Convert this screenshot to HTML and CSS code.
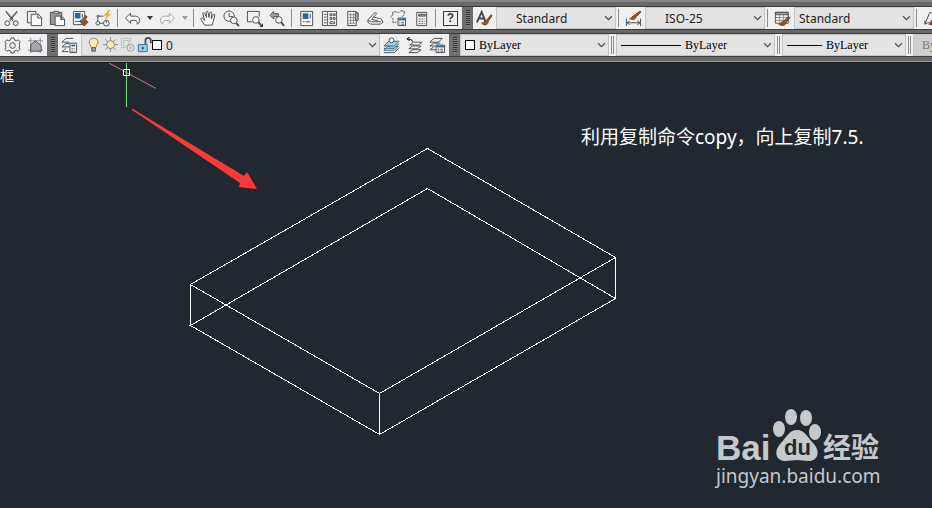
FILE: index.html
```html
<!DOCTYPE html>
<html lang="zh-CN">
<head>
    <meta charset="UTF-8">
    <meta name="viewport" content="width=device-width, initial-scale=1.0">
    <title>CAD</title>
    <link rel="stylesheet" href="styles.css">
</head>
<body>
    <header>
        <!-- Standard + Styles toolbars -->
        <div class="toolbar">
            <button aria-label="Cut"><svg viewBox="0 0 18 18"><path d="M3 2l8 10M15 2L7 12"/><path d="M3 1l8 9M15 1L7 10"/><circle cx="4.500" cy="14" r="2.500"/><circle cx="13.500" cy="14" r="2.500"/></svg></button>
            <button aria-label="Copy"><svg viewBox="0 0 18 18"><path d="M5 13.500H1.500V1.500H10.500V4" /><path class="paper" d="M5.500 4.500H13l3.500 3.500V16.500H5.500zM12.500 4.500V8.500H16.500"/></svg></button>
            <button aria-label="Paste"><svg viewBox="0 0 18 18"><path class="board" d="M1.500 2.500H13.500V15.500H1.500z"/><path class="paper" d="M5 1.500h5v2H5z"/><path class="paper" d="M6.500 6.500H13l3.500 3V16.500H6.500zM12.500 6.500V10H16.500"/></svg></button>
            <button aria-label="Match properties"><svg viewBox="0 0 18 18"><path class="paper" d="M1.500 1.500H13.500V15.500H1.500z"/><path class="blue" d="M3 3h6v6H3z"/><path d="M11 4v4M3 12h5"/><path class="brush" d="M8 12l5 5 4-4-3-3 2-3-2-1-2 3z"/></svg></button>
            <button aria-label="Block editor"><svg viewBox="0 0 18 18"><path d="M9 6.500H3v7.500h7"/><circle class="paper" cx="3" cy="6.500" r="1"/><circle class="paper" cx="3" cy="14" r="2"/><circle class="paper" cx="12" cy="14" r="3"/><path d="M12 11v3"/><path class="gold" d="M14 0L9 6h3l-2 5 7-7h-3l2-4z"/></svg></button>
            <span class="sep"></span>
            <button aria-label="Undo"><svg viewBox="0 0 18 18"><path class="paper" d="M1.500 8.500L7 3.500V6.500H12c3 0 4.500 2 4.500 4.500s-1 3-2.500 4c.5-3-1-4-2.500-4H7v3z"/></svg></button>
            <button class="drop" aria-label="Undo list"><svg viewBox="0 0 8 8"><path class="ink" d="M1 2h6L4 6z"/></svg></button>
            <button class="dim" aria-label="Redo"><svg viewBox="0 0 18 18"><path class="paper" d="M16.500 8.500L11 3.500V6.500H6C3 6.500 1.500 8.500 1.500 11s1 3 2.500 4c-.5-3 1-4 2.500-4H11v3z"/></svg></button>
            <button class="drop dim" aria-label="Redo list"><svg viewBox="0 0 8 8"><path class="ink" d="M1 2h6L4 6z"/></svg></button>
            <span class="sep"></span>
            <button aria-label="Pan"><svg viewBox="0 0 18 18"><path class="paper" d="M5 16L1 10c-.5-1.500 1-2 2-1l2 2L3 4c0-1.500 1.500-1.500 2-.5L7 8 6.500 2.500c0-1.500 2-1.500 2 0L9.500 8l1-5c.5-1.500 2-1 2 .5L12 9l2-4c1-1 2-.5 1.500 1L14 12l-1 4z"/></svg></button>
            <button aria-label="Zoom realtime"><svg viewBox="0 0 18 18"><circle cx="6.500" cy="6.500" r="5.500"/><path d="M6.500 3v4h4"/><circle class="lens" cx="11.500" cy="11" r="3.500"/><path class="thick" d="M14 14l3 3"/></svg></button>
            <button aria-label="Zoom window"><svg viewBox="0 0 18 18"><path d="M7 12.500H1.500V1.500H14V7"/><circle class="lens" cx="10.500" cy="10.500" r="3.500"/><path class="thick" d="M13 13l3 3"/><path class="ink" d="M18 14v4h-4z"/></svg></button>
            <button aria-label="Zoom previous"><svg viewBox="0 0 18 18"><path class="steel" d="M1 5.500L5 1.500v2.500h5v3H5v2.500z"/><circle class="lens" cx="10.500" cy="10.500" r="3.500"/><path class="thick" d="M13 13l3 4"/></svg></button>
            <span class="sep"></span>
            <button aria-label="Properties"><svg viewBox="0 0 18 18"><path class="paper" d="M3 1.500H15.500V16.500H3z"/><path class="blue" d="M5 3.500h6v6H5z"/><path d="M13 4v5M5 12.500h2M8 12.500h5"/></svg></button>
            <button aria-label="DesignCenter"><svg viewBox="0 0 18 18"><path class="paper" d="M1.500 1.500H16.500V16.500H1.500z"/><path d="M7 2v14M3 4.500h3M3 7.500h3M3 10.500h3M3 13.500h3M9.500 4h2v2h-2zM13 4h2v2h-2zM13 8h2v2h-2zM9.500 8h2v2h-2zM9.500 12.500h5v2h-5z"/></svg></button>
            <button aria-label="Tool palettes"><svg viewBox="0 0 18 18"><path class="paper" d="M4 1.500H13V16.500H4z"/><path class="steel" d="M12 3h3v8h-3z"/><path class="fine" d="M7 3v12M10 3v12M5 5h7M5 8h7M5 11h7M5 14h7"/></svg></button>
            <button aria-label="Sheet set manager"><svg viewBox="0 0 18 18"><path class="paper" d="M1 10.500L8 3c1-1 2.500 0 1.500 1.500L7 7.500l8 2 2 3.500-3 2H4l-3-2z"/><path d="M1 11l4 1.500h10M7 7.500L5 10l7 1.500"/></svg></button>
            <button aria-label="Markup set manager"><svg viewBox="0 0 18 18"><path class="cloud" d="M3 5V2h4l2 1 2-2h4v4l-2 2M3 5l-2 2 2 2v4h4"/><path class="paper" d="M8.500 8.500h8v8h-8z"/><path class="blue" d="M9 9h7v2H9z"/><path d="M10 13h1M12 13h3M10 15h1M12 15h3"/></svg></button>
            <button aria-label="QuickCalc"><svg viewBox="0 0 18 18"><path class="paper" d="M4 2.500H14.500V16.500H4z"/><path class="steel" d="M6 4.500h7v2H6z"/><path class="dots" d="M6 9.500h7M6 12h7M6 14.500h7"/></svg></button>
            <span class="sep"></span>
            <button class="help" aria-label="Help"><span>?</span></button>
            <span class="grip"></span>
            <button aria-label="Text style"><svg viewBox="0 0 18 18"><path class="thick" d="M1 13L6 2l4 10M3 9h6"/><path class="brush" d="M6 14c3 0 2-3 5-3l5-6 1 1-4 6c0 4-4 5-7 2z"/></svg></button>
            <div class="combo style"><select class="indent" aria-label="Text style"><option>Standard</option></select><svg viewBox="0 0 8 6"><path d="M1 1l3 3 3-3"/></svg></div>
            <span class="sep"></span>
            <button aria-label="Dimension style"><svg viewBox="0 0 18 18"><path d="M1.500 9v8M16.500 9v8M2 13.500h14M5 11.500l-3 2 3 2M13 11.500l3 2-3 2"/><path class="brush" d="M5 9c2 0 2-2 4-3l7-5 1 1-5 5c-1 3-4 4-7 2z"/></svg></button>
            <div class="combo style"><select class="indent" aria-label="Dimension style"><option>ISO-25</option></select><svg viewBox="0 0 8 6"><path d="M1 1l3 3 3-3"/></svg></div>
            <span class="sep"></span>
            <button aria-label="Table style"><svg viewBox="0 0 18 18"><path class="paper" d="M1.500 2.500H15V14H1.500z"/><path class="steel" d="M1.500 2.500H15V5H1.500z"/><path class="fine" d="M2 8h12M2 11h12M6 5v9M10 5v9"/><path class="brush" d="M5 15c3 0 2-3 5-3l5-5 2 1-4 5c-1 4-5 4-8 2z"/></svg></button>
            <div class="combo style"><select aria-label="Table style"><option>Standard</option></select><svg viewBox="0 0 8 6"><path d="M1 1l3 3 3-3"/></svg></div>
            <span class="sep"></span>
            <button aria-label="Multileader style"><svg viewBox="0 0 18 18"><path d="M2 15L7 3h9M2 15v-4M2 15l4-2"/><path class="brush" d="M6 15l5-6h5v8z"/></svg></button>
        </div>

        <!-- Layers + Properties toolbars -->
        <div class="toolbar layers">
            <button aria-label="Workspace settings"><svg viewBox="0 0 18 18"><path d="M7.500 1h3l.5 2 2 1 2-1 2 2-1 2 .5 2-.5 2 1 2-2 2-2-1-2 1-.5 2h-3L7 15l-2-1-2 1-2-2 1-2-.5-2L2 7 1 5l2-2 2 1 2-1z"/><circle cx="9" cy="9" r="3"/></svg></button>
            <button aria-label="My workspace"><svg viewBox="0 0 18 18"><path class="fine" d="M4 1v16M14 1v16M1 4h16M1 14h16"/><path class="steel" d="M4 8l5-4 6 5v6H4z"/></svg></button>
            <span class="grip"></span>
            <button aria-label="Layer properties"><svg viewBox="0 0 18 18"><path d="M9 1.500H5l-4 4h8M9 7H5l-4 3.500h8M5 12l-4 3.500h7M9 1.500h4"/><path class="paper" d="M9.500 6.500h7v10h-7z"/><path class="blue" d="M11 8h4v2h-4z"/><path class="dots" d="M11 12.500h4M11 15h4"/></svg></button>
            <div class="combo layer">
                <svg class="state" viewBox="0 0 18 18"><path class="bulb" d="M6 12L4.500 8.500C2 4 5 1.500 8.500 1.500S15 4 12.500 8.500L11 12z"/><path class="steel" d="M6.500 12h4v4h-4z"/></svg>
                <svg class="state" viewBox="0 0 18 18"><path class="fine" d="M8.500 0v17M0 8.500h17M2.500 2.500l12 12M14.500 2.500l-12 12"/><circle class="bulb" cx="8.500" cy="8.500" r="4.500"/></svg>
                <svg class="state dim" viewBox="0 0 18 18"><path class="fine" d="M12 6V1.500H1.500V12H8M4 4h6v6H4z"/><circle cx="12" cy="12" r="4"/><circle cx="12" cy="12" r="1"/></svg>
                <svg class="state" viewBox="0 0 18 18"><path class="sky" d="M1.500 8.500h10v8h-10z"/><path class="thick" d="M9.500 8V4c0-4 6-4 6 0v3M6.500 11v3"/></svg>
                <span class="swatch"></span>
                <select aria-label="Layer"><option>0</option></select><svg viewBox="0 0 8 6"><path d="M1 1l3 3 3-3"/></svg>
            </div>
            <button aria-label="Make layer current"><svg viewBox="0 0 18 18"><path d="M1 14l4-4h11l-4 4zM1 16.500h11l5-5"/><path class="sky" d="M1 9.500l5-5h11l-5 5zM1 12h11l5-5"/><circle class="lens" cx="9" cy="3.500" r="2.500"/></svg></button>
            <button aria-label="Layer previous"><svg viewBox="0 0 18 18"><path class="paper" d="M3 16.500l4-3h9l-4 3zM3 12.500l4-3h9l-4 3zM4 8.500l4-3h9l-4 3z"/><path class="black" d="M7 5c0-2-3-3-6-3M4 0L1 2l3 2"/></svg></button>
            <button aria-label="Layer states"><svg viewBox="0 0 18 18"><path d="M1 5.500l4-4h9l-4 4zM1 9.500l4-3h7M1 9.500h7M1 13.500l4-3M1 13.500h6"/><path class="paper" d="M7.500 8.500h9v8h-9z"/><path class="blue" d="M8 9h8v2H8z"/><path d="M9 13h2M12 13h3M9 15h2M12 15h3"/></svg></button>
            <span class="grip"></span>
            <div class="combo color"><span class="swatch"></span><select aria-label="Color"><option>ByLayer</option></select><svg viewBox="0 0 8 6"><path d="M1 1l3 3 3-3"/></svg></div>
            <span class="sep double"></span>
            <div class="combo linetype"><span class="line long"></span><select aria-label="Linetype"><option>ByLayer</option></select><svg viewBox="0 0 8 6"><path d="M1 1l3 3 3-3"/></svg></div>
            <span class="sep double"></span>
            <div class="combo lineweight"><span class="line"></span><select aria-label="Lineweight"><option>ByLayer</option></select><svg viewBox="0 0 8 6"><path d="M1 1l3 3 3-3"/></svg></div>
            <span class="sep double"></span>
            <div class="combo plot"><select aria-label="Plot style" disabled><option>ByColor</option></select></div>
        </div>
    </header>

    <main>
        <svg class="drawing">
            <g class="wire">
                <path d="M427.500 85.500L615.500 194.500L379.500 330.500L190.500 221.500Z"/>
                <path d="M427.500 125.500L615.500 235.500L379.500 371.500L190.500 262.500Z"/>
                <path d="M190.500 221.500V262.500M379.500 330.500V371.500M615.500 194.500V235.500"/>
            </g>
            <!-- crosshair -->
            <path class="axis-x" d="M109 0L156 25.500"/>
            <path class="axis-y" d="M126.500 0V44"/>
            <path class="pickbox" d="M123.500 6.500h6v6h-6z"/>
            <path class="arrow" d="M132 45L133 46L244 113L247 109L257 126L239 124L240 120L132 47Z"/>
        </svg>
        <span class="view-label">框</span>
        <p class="note">利用复制命令copy，向上复制7.5.</p>
        <div class="watermark">
            <svg viewBox="0 0 170 54">
                <text class="bai" x="0" y="52">Bai</text>
                <ellipse cx="63" cy="21" rx="6" ry="8"/>
                <ellipse cx="75" cy="9" rx="6" ry="8"/>
                <ellipse cx="90" cy="10" rx="6" ry="8"/>
                <ellipse cx="99" cy="24" rx="6" ry="8"/>
                <path d="M81 22c8 0 11 8 16 13 8 8 5 18-4 18-5 0-8-1-12-1s-7 1-12 1c-9 0-12-10-4-18 5-5 8-13 16-13z"/>
                <text class="du" x="68" y="47">du</text>
                <text class="jing" x="107" y="50">经验</text>
            </svg>
            <span>jingyan.baidu.com</span>
        </div>
    </main>
</body>
</html>
```
FILE: styles.css
```css
* {
    box-sizing: border-box;
}

body {
    margin: 0;
    height: 100vh;
    display: flex;
    flex-direction: column;
    overflow: hidden;
    background-color: #212830;
    font-family: "Noto Sans", "Noto Sans CJK SC", sans-serif;
}

header {
    display: flex;
    flex-direction: column;
    gap: 3px;
    padding: 4px 0;
    background-color: #686868;
    border-top: 2px solid #858585;
    border-bottom: 1px solid #9c9e9c;
}

.toolbar {
    display: flex;
    height: 24px;
    overflow: hidden;
    background-color: #f0f0f0;
    border-top: 1px solid #3c3c3c;
    border-bottom: 1px solid #3c3c3c;
}

.layers {
    padding-left: 1px;
}

svg {
    fill: none;
    stroke: #454b52;
}

button {
    flex: none;
    display: flex;
    align-items: center;
    justify-content: center;
    width: 23px;
    padding: 0;
    border: none;
    background: none;
}

button svg {
    width: 17px;
    height: 17px;
}

.drop {
    width: 12px;
}

.drop svg {
    width: 8px;
    height: 8px;
}

.dim {
    opacity: 0.45;
}

.help span {
    width: 15px;
    height: 15px;
    border: 1px solid #33383e;
    font-size: 12px;
    font-weight: bold;
    line-height: 13px;
    color: #33383e;
}

.sep {
    flex: none;
    width: 6px;
    border-left: 2px solid #f0f0f0;
    border-right: 3px solid #f0f0f0;
    background-color: #8d8d8d;
    margin: 2px 0;
}

.double {
    width: 7px;
    background: linear-gradient(to right, #8d8d8d 1px, #f0f0f0 1px, #f0f0f0 2px, #8d8d8d 2px);
    border-right-width: 2px;
}

.grip {
    flex: none;
    width: 11px;
    border: solid #6e6e6e;
    border-width: 3px 3px 3px 4px;
    background: repeating-linear-gradient(#303030 0 1px, #808080 1px 2px);
}

/* Drop-downs */
.combo {
    flex: none;
    display: flex;
    align-items: center;
    padding: 0 2px 0 4px;
    background-color: #e3e3e3;
    border: 1px solid #c4c4c4;
}

.combo > svg:last-child {
    flex: none;
    width: 9px;
    height: 7px;
}

.combo select {
    flex: 1;
    min-width: 0;
    height: 20px;
    padding: 0;
    appearance: none;
    border: none;
    background: none;
    color: #000;
    font-family: "Liberation Serif", serif;
    font-size: 12px;
}

.style {
    width: 120px;
}

.style select,
.layer select {
    font-family: "Noto Sans", sans-serif;
    font-size: 12px;
    color: #222;
}

.combo .indent {
    padding-left: 15px;
}

.layer {
    width: 299px;
}

.state {
    flex: none;
    width: 16px;
    height: 16px;
    margin-right: 1px;
}

.swatch {
    flex: none;
    width: 10px;
    height: 10px;
    margin-right: 4px;
    border: 1px solid #000;
    background-color: #fff;
}

.layer .swatch {
    margin-left: -2px;
}

.line {
    flex: none;
    width: 35px;
    height: 1px;
    margin-right: 4px;
    background-color: #000;
}

.long {
    width: 60px;
}

.color {
    width: 149px;
}

.linetype {
    width: 159px;
}

.lineweight {
    width: 124px;
}

.plot {
    flex: 1 0 80px;
    padding-left: 8px;
    background-color: #cfcfcf;
}

.plot select {
    color: #777;
    opacity: 1;
}

/* Icon parts */
.paper, .lens { fill: #fafafa; }
.board { fill: #9a9a9a; }
.steel { fill: #a3a8ad; }
.blue { fill: #2f6296; stroke: none; }
.sky { fill: #9fd0ea; stroke: #2c6587; }
.gold { fill: #f2a93b; stroke: none; }
.bulb { fill: #fbeab0; stroke: #85795a; }
.brush { fill: #8b5a33; stroke: #6b4326; }
.ink { fill: #33383e; stroke: none; }
.black { stroke: #000; }
.fine { stroke: #858a90; }
.thick { stroke-width: 2; }
.dots { stroke-dasharray: 2 1; }
.cloud { stroke-dasharray: 3 1; }

/* Model space */
main {
    flex: 1;
    position: relative;
    overflow: hidden;
    border-top: 1px solid #14191e;
}

.drawing {
    position: absolute;
    top: 0;
    left: 0;
    width: 100%;
    height: 100%;
}

.wire {
    stroke: #fff;
    shape-rendering: crispEdges;
}

.axis-x { stroke: #c9797b; }
.axis-y { stroke: #7ee08a; }
.pickbox { stroke: #fff; }
.arrow { fill: #fb3a37; stroke: none; }

.view-label {
    position: absolute;
    top: 4px;
    left: 0;
    font-size: 14px;
    line-height: 18px;
    color: #fff;
}

.note {
    position: absolute;
    top: 60px;
    left: 581px;
    margin: 0;
    font-size: 19px;
    line-height: 28px;
    white-space: nowrap;
    color: #fff;
}

.watermark {
    position: absolute;
    right: 46px;
    bottom: 18px;
    display: flex;
    flex-direction: column;
    width: 170px;
    color: #c6c8ca;
    font-size: 19px;
    line-height: 28px;
}

.watermark svg {
    width: 170px;
    height: 54px;
    overflow: visible;
    fill: #c6c8ca;
    stroke: none;
}

.bai {
    font-family: "Liberation Sans", sans-serif;
    font-size: 35px;
    font-weight: bold;
}

.du {
    fill: #212830;
    font-family: "Liberation Sans", sans-serif;
    font-size: 22px;
    font-weight: bold;
}

.jing {
    font-family: "Noto Sans CJK SC", sans-serif;
    font-size: 28px;
    font-weight: bold;
}
```
